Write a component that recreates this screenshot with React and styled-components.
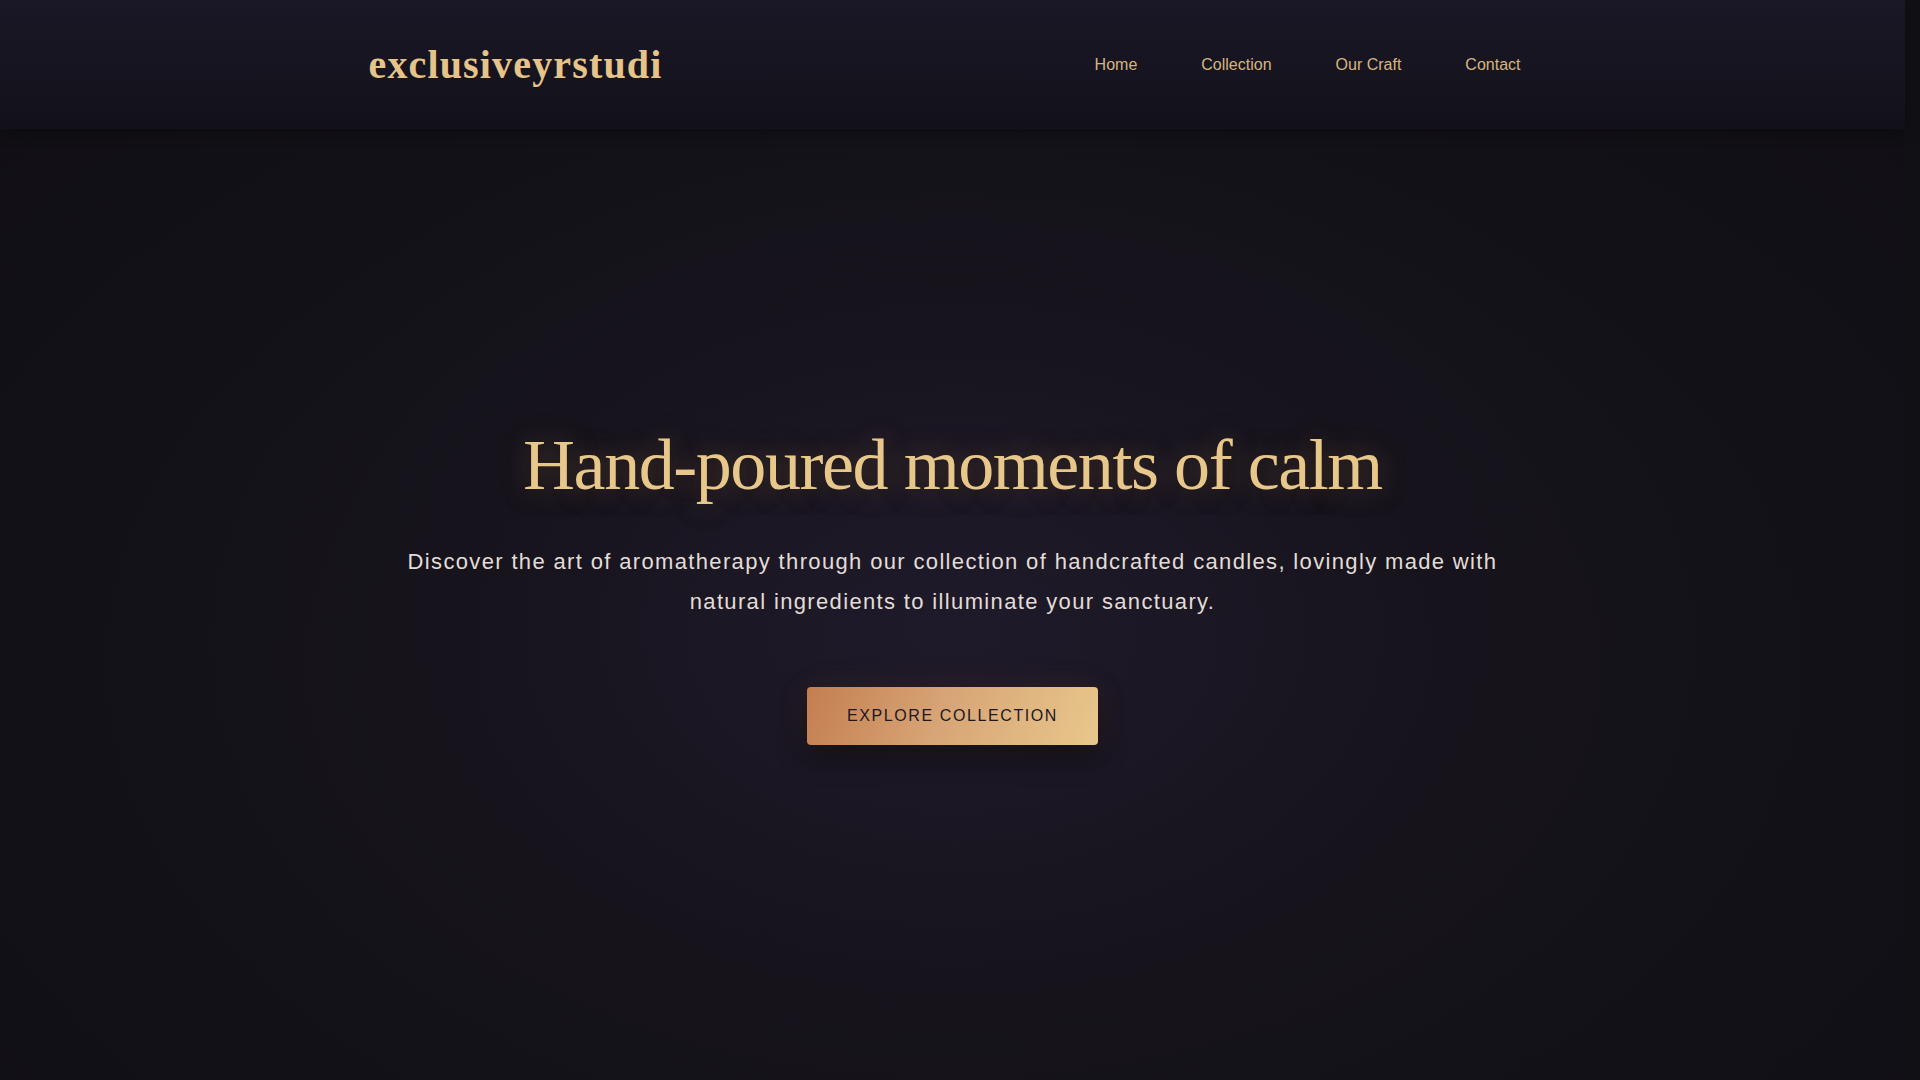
import React from "react";
import styled, { createGlobalStyle } from "styled-components";

const GlobalStyle = createGlobalStyle`
  * { box-sizing: border-box; }
  html, body {
    margin: 0;
    padding: 0;
    background: #111015;
  }
  body {
    font-family: "Liberation Sans", Arial, sans-serif;
    color: #e4ded6;
  }
`;

const Page = styled.div`
  min-height: 100vh;
  margin-right: 15px;
  background:
    radial-gradient(ellipse 55% 60% at 50% 52%, rgba(34, 28, 46, 0.75) 0%, rgba(26, 22, 34, 0.35) 45%, rgba(0, 0, 0, 0) 75%),
    radial-gradient(ellipse 90% 90% at 50% 55%, #17141d 0%, #131118 55%, #0e0d11 100%);
`;

const Header = styled.header`
  background: linear-gradient(180deg, #1a1726 0%, #16141f 60%, #121019 100%);
  box-shadow: 0 4px 14px rgba(0, 0, 0, 0.3);
`;

const Container = styled.div`
  max-width: 1200px;
  margin: 0 auto;
  padding: 0 16px;
`;

const HeaderRow = styled(Container)`
  display: flex;
  align-items: center;
  justify-content: space-between;
  padding-top: 41px;
  padding-bottom: 41px;
`;

const Logo = styled.a`
  font-family: "Liberation Serif", "Times New Roman", serif;
  font-weight: 700;
  font-size: 40px;
  letter-spacing: 1.15px;
  color: #e6c489;
  text-decoration: none;
`;

const Nav = styled.nav`
  display: flex;
  gap: 32px;
`;

const NavLink = styled.a`
  padding: 8px 16px;
  font-size: 16px;
  color: #d6b582;
  text-decoration: none;
`;

const Hero = styled.section`
  min-height: 100vh;
  padding: 293px 16px 120px;
  display: flex;
  flex-direction: column;
  align-items: center;
  text-align: center;
`;

const Title = styled.h1`
  margin: 0 0 34px;
  font-family: "Liberation Serif", "Times New Roman", serif;
  font-weight: 400;
  font-size: 72px;
  line-height: 1.2;
  letter-spacing: -0.02em;
  color: #e8c78b;
  text-shadow: 0 0 28px rgba(214, 160, 100, 0.35), 0 4px 20px rgba(0, 0, 0, 0.5);
`;

const Lead = styled.p`
  margin: 0 0 65px;
  max-width: 1140px;
  font-size: 22px;
  line-height: 1.8;
  letter-spacing: 1.35px;
  color: #e2ddd6;
`;

const Button = styled.a`
  display: inline-block;
  padding: 20px 40px;
  border-radius: 4px;
  background: linear-gradient(110deg, #c47e50 0%, #d7a475 45%, #e8c78c 100%);
  color: #1d1820;
  font-size: 16px;
  letter-spacing: 0.1em;
  text-transform: uppercase;
  text-decoration: none;
  box-shadow: 0 12px 28px rgba(0, 0, 0, 0.45), 0 0 30px rgba(196, 126, 80, 0.12);
`;

const links = ["Home", "Collection", "Our Craft", "Contact"];

export default function App() {
  return (
    <>
      <GlobalStyle />
      <Page>
        <Header>
          <HeaderRow>
            <Logo href="#">exclusiveyrstudi</Logo>
            <Nav>
              {links.map((l) => (
                <NavLink key={l} href="#">{l}</NavLink>
              ))}
            </Nav>
          </HeaderRow>
        </Header>
        <Hero>
          <Title>Hand-poured moments of calm</Title>
          <Lead>
            Discover the art of aromatherapy through our collection of handcrafted candles, lovingly made with
            natural ingredients to illuminate your sanctuary.
          </Lead>
          <Button href="#">Explore Collection</Button>
        </Hero>
      </Page>
    </>
  );
}
